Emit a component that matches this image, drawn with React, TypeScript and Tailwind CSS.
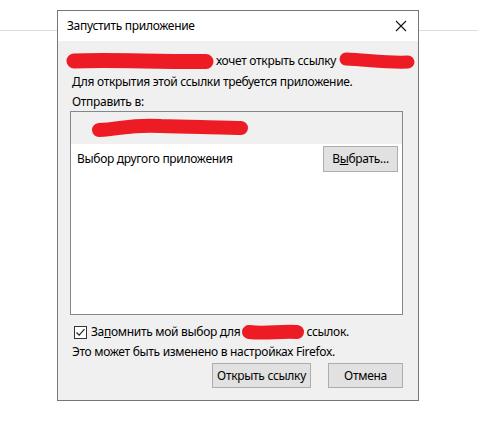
import React from "react";

function Scribble({ w, h, d, sw }: { w: number; h: number; d: string; sw: number }) {
  return (
    <svg width={w} height={h} viewBox={`0 0 ${w} ${h}`} className="block shrink-0">
      <path d={d} stroke="#ed1c24" strokeWidth={sw} strokeLinecap="round" strokeLinejoin="round" fill="none" />
    </svg>
  );
}

export default function App() {
  return (
    <div
      className="relative w-[488px] h-[424px] bg-white overflow-hidden text-[12px] tracking-[-0.3px] text-black whitespace-nowrap"
      style={{ fontFamily: '"Noto Sans", "Open Sans", sans-serif' }}
    >
      <div className="absolute left-0 top-[30px] w-[478px] h-px bg-[#dcdcdc]" />
      <div className="relative z-10 ml-[57px] mt-[10px] w-[362px] h-[391px] border border-[#767676] flex flex-col">
        <div className="h-[30px] bg-white flex items-center justify-between pl-[9px] pr-[9px]">
          <span className="leading-none">Запустить приложение</span>
          <svg width="12" height="12" viewBox="0 0 12 12" className="mr-[2px]">
            <path d="M1 1 L11 11 M11 1 L1 11" stroke="#111" strokeWidth="1.1" />
          </svg>
        </div>
        <div className="flex-1 bg-[#f0f0f0] flex flex-col pt-[9px]">
          <div className="h-[22px] flex items-center pl-[8px]">
            <Scribble w={148} h={22} sw={15} d="M8 11 C 40 9, 90 12, 140 11.5" />
            <span className="ml-[2px] leading-none">хочет открыть ссылку</span>
            <Scribble w={80} h={22} sw={13} d="M10 9 C 32 10, 52 13, 72 12" />
          </div>
          <div className="h-[20px] flex items-center pl-[14px]">
            <span>Для открытия этой ссылки требуется приложение.</span>
          </div>
          <div className="h-[19px] flex items-center pl-[14px]">
            <span>Отправить в:</span>
          </div>
          <div className="ml-[12px] w-[333px] h-[204px] border border-[#828790] bg-white flex flex-col">
            <div className="h-[32px] bg-[#f0f0f0] flex items-center pl-[20px]">
              <Scribble w={158} h={24} sw={14} d="M8 14 C 30 13, 40 8, 70 10 C 100 11, 130 11, 150 12" />
            </div>
            <div className="h-[30px] flex items-center justify-between pl-[6px] pr-[4px]">
              <span>Выбор другого приложения</span>
              <button className="w-[75px] h-[26px] bg-[#e1e1e1] border border-[#adadad] flex items-center justify-center tracking-[-0.3px]">
                <span>
                  В<span className="underline">ы</span>брать...
                </span>
              </button>
            </div>
          </div>
          <div className="mt-[7px] h-[20px] flex items-center pl-[16px]">
            <div className="w-[13px] h-[13px] border border-[#333] bg-white flex items-center justify-center">
              <svg width="11" height="11" viewBox="0 0 11 11">
                <path d="M1.5 5.5 L4.2 8.2 L9.5 2.2" stroke="#222" strokeWidth="1.2" fill="none" />
              </svg>
            </div>
            <span className="ml-[4px]">
              За<span className="underline">п</span>омнить мой выбор для
            </span>
            <Scribble w={66} h={20} sw={14} d="M9 10 C 25 12, 40 9, 57 10" />
            <span>ссылок.</span>
          </div>
          <div className="h-[20px] flex items-center pl-[14px]">
            <span>Это может быть изменено в настройках Firefox.</span>
          </div>
          <div className="mt-[1px] flex justify-end gap-[17px] pr-[15px]">
            <button className="w-[99px] h-[25px] bg-[#e1e1e1] border border-[#adadad] flex items-center justify-center tracking-[-0.3px]">
              Открыть ссылку
            </button>
            <button className="w-[75px] h-[25px] bg-[#e1e1e1] border border-[#adadad] flex items-center justify-center tracking-[-0.3px]">
              Отмена
            </button>
          </div>
        </div>
      </div>
    </div>
  );
}
